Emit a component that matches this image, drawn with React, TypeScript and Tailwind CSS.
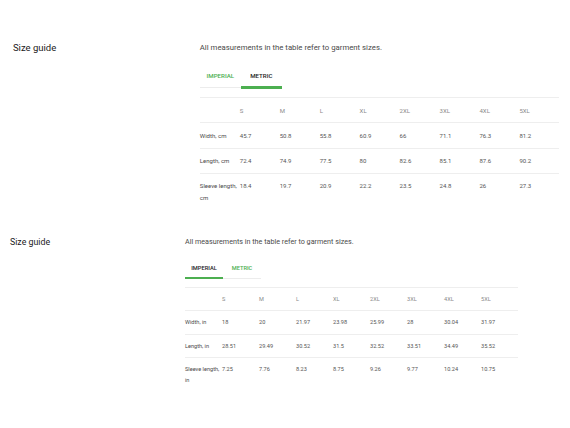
import React from "react";

const sizes = ["S", "M", "L", "XL", "2XL", "3XL", "4XL", "5XL"];

const metric: string[][] = [
  ["Width, cm", "45.7", "50.8", "55.8", "60.9", "66", "71.1", "76.3", "81.2"],
  ["Length, cm", "72.4", "74.9", "77.5", "80", "82.6", "85.1", "87.6", "90.2"],
  ["Sleeve length, cm", "18.4", "19.7", "20.9", "22.2", "23.5", "24.8", "26", "27.3"],
];

const imperial: string[][] = [
  ["Width, in", "18", "20", "21.97", "23.98", "25.99", "28", "30.04", "31.97"],
  ["Length, in", "28.51", "29.49", "30.52", "31.5", "32.52", "33.51", "34.49", "35.52"],
  ["Sleeve length, in", "7.25", "7.76", "8.23", "8.75", "9.26", "9.77", "10.24", "10.75"],
];

function Tab({ label, active }: { label: string; active: boolean }) {
  return (
    <div
      className={
        "relative w-[38px] pt-[4px] pb-[5px] text-center text-[5.7px] leading-[10px] font-medium " +
        (active ? "text-[#222]" : "text-[#4caf50]")
      }
    >
      {label}
      {active && <div className="absolute left-0 right-0 -bottom-px h-[2px] bg-[#4caf50]" />}
    </div>
  );
}

function SizeGuide({ unit, wide }: { unit: "metric" | "imperial"; wide?: boolean }) {
  const rows = unit === "metric" ? metric : imperial;
  return (
    <div className="flex font-['Roboto',sans-serif]">
      <div
        className={
          "w-[185px] shrink-0 text-[8.8px] leading-[10px] text-[#1a1a1a] " +
          (wide ? "pl-[12px]" : "pl-[10px]")
        }
      >
        Size guide
      </div>
      <div className="flex flex-col">
        <p className="text-[7.2px] leading-[10px] text-[#4a4a4a]">
          All measurements in the table refer to garment sizes.
        </p>
        <div className="mt-[12px] flex self-start border-b border-[#ececec]">
          <Tab label="IMPERIAL" active={unit === "imperial"} />
          <Tab label="METRIC" active={unit === "metric"} />
        </div>
        <div className="mt-[8px] w-[333px] text-[5.6px] leading-[10.5px]">
          <div className="grid grid-cols-[repeat(9,37px)] border-t border-[#eeeeee] text-[#8a8a8a]">
            <div className="py-[6px] pr-[2px]" />
            {sizes.map((s) => (
              <div key={s} className="py-[6px] pr-[2px]">
                {s}
              </div>
            ))}
          </div>
          {rows.map((r) => (
            <div
              key={r[0]}
              className="grid grid-cols-[repeat(9,37px)] border-t border-[#eeeeee] text-[#555]"
            >
              {r.map((c, j) => (
                <div key={j} className={"py-[6px] pr-[2px] " + (j === 0 ? "text-[#4a4a4a]" : "")}>
                  {c}
                </div>
              ))}
            </div>
          ))}
        </div>
      </div>
    </div>
  );
}

export default function App() {
  return (
    <div className="w-[570px] h-[428px] bg-white overflow-hidden">
      <div className="pt-[40px] [zoom:1.08]">
        <SizeGuide unit="metric" wide />
      </div>
      <div className="pt-[27px]">
        <SizeGuide unit="imperial" />
      </div>
    </div>
  );
}
